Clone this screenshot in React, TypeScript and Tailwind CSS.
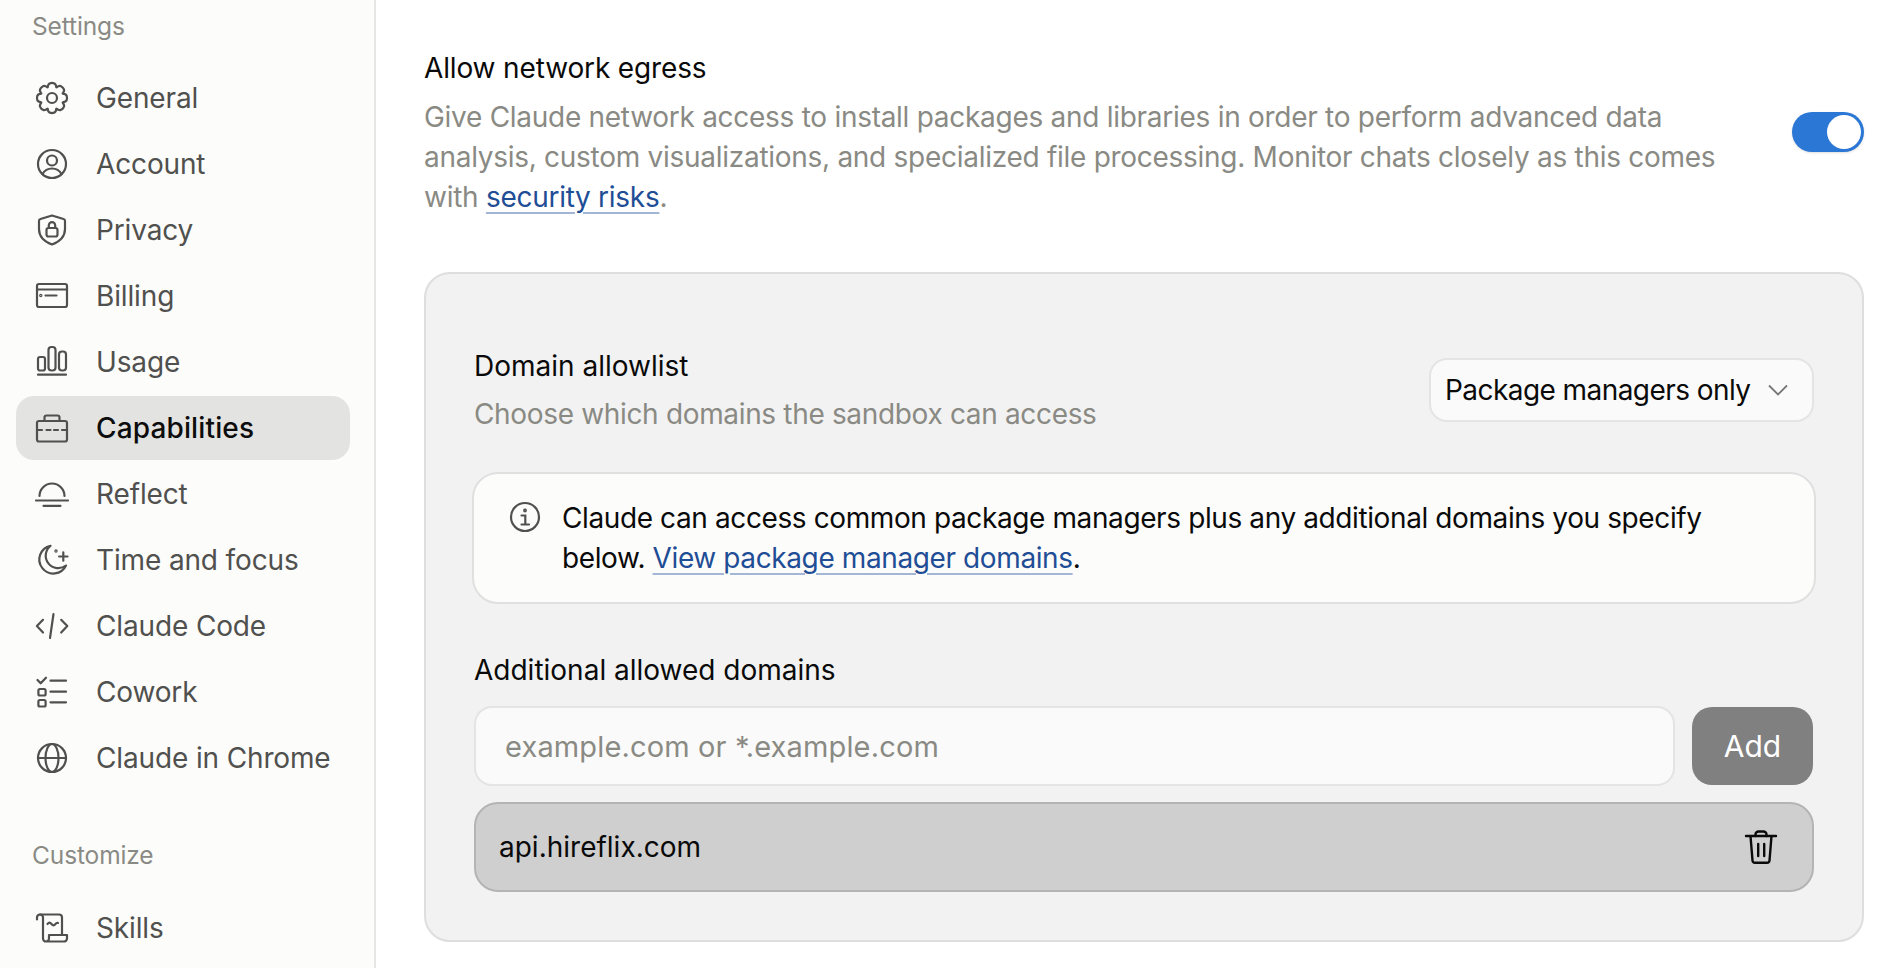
import React from 'react';

const stroke = {
  fill: 'none',
  stroke: 'currentColor',
  strokeWidth: 2.2,
  strokeLinecap: 'round' as const,
  strokeLinejoin: 'round' as const,
};

const Icon = ({ children, className = 'w-8 h-8 shrink-0 overflow-visible' }: { children: React.ReactNode; className?: string }) => (
  <svg viewBox="0 0 32 32" className={className} {...stroke}>
    {children}
  </svg>
);

// eight rounded teeth around the hub
const gearPath = Array.from({ length: 8 }, (_, i) => {
  const at = (deg: number, r: number) => {
    const a = ((i * 45 - 90 + deg) * Math.PI) / 180;
    return `${(16 + r * Math.cos(a)).toFixed(2)} ${(16 + r * Math.sin(a)).toFixed(2)}`;
  };
  return `${i === 0 ? 'M' : 'L'}${at(-22, 11.6)} Q${at(-15, 14.8)} ${at(-8, 14.8)} Q${at(0, 15.4)} ${at(8, 14.8)} Q${at(15, 14.8)} ${at(22, 11.6)}`;
}).join(' ') + ' Z';

const GearIcon = () => (
  <Icon>
    <path d={gearPath} />
    <circle cx="16" cy="16" r="5" />
  </Icon>
);

const AccountIcon = () => (
  <Icon>
    <circle cx="16" cy="16" r="14" />
    <circle cx="16" cy="12.5" r="5" />
    <path d="M6.500 26c2-3.600 5.500-5.500 9.500-5.500s7.500 1.900 9.500 5.500" />
  </Icon>
);

const PrivacyIcon = () => (
  <Icon>
    <path d="M16 1.500 27.500 5a2 2 0 0 1 1.500 2v8c0 7.500-5 12.500-13 15.500C8 27.500 3 22.500 3 15V7a2 2 0 0 1 1.500-2z" />
    <rect x="10.500" y="14" width="11" height="8.500" rx="2" />
    <path d="M12.800 14v-2.700a3.200 3.200 0 0 1 6.400 0V14" />
  </Icon>
);

const BillingIcon = () => (
  <Icon>
    <rect x="1" y="4" width="30" height="23" rx="2" />
    <path d="M1 9.500h30M9.500 15.500h11" />
    <circle cx="4.800" cy="15.500" r=".6" />
  </Icon>
);

const UsageIcon = () => (
  <Icon>
    <rect x="2" y="11" width="7" height="13.500" rx="2" />
    <rect x="12.500" y="1" width="7" height="23.500" rx="3" />
    <rect x="23" y="5.500" width="7" height="19" rx="3" />
    <path d="M2 28.700h28" />
  </Icon>
);

const BriefcaseIcon = () => (
  <Icon>
    <rect x="1" y="9" width="30" height="20.500" rx="2" />
    <path d="M8.500 9V5.500a2 2 0 0 1 2-2h11a2 2 0 0 1 2 2V9M1 18h5M10.500 18h4M18 18h4M26 18h5" />
  </Icon>
);

const ReflectIcon = () => (
  <Icon>
    <path d="M3.500 18a12.500 12.500 0 0 1 25 0M0 22.500h32M7.500 27.800h17" />
  </Icon>
);

const MoonIcon = () => (
  <Icon>
    <path d="M14.500 1.800a14 14 0 1 0 15.500 19.700A12 12 0 0 1 14.500 1.800z" />
    <path d="M27.300 8.300v8.400M23.100 12.500h8.400" />
    <circle cx="20" cy="7" r=".6" />
  </Icon>
);

const CodeIcon = () => (
  <Icon>
    <path d="M7 9.800.9 16 7 22.500M25.200 9.800 31.300 16l-6.100 6.500M17.500 4 14 28" />
  </Icon>
);

const CoworkIcon = () => (
  <Icon>
    <path d="m1.500 4 3.200 3.300L10 1.700" />
    <rect x="2.400" y="13" width="7.200" height="6.500" rx="1.500" />
    <rect x="2.400" y="24" width="7.200" height="6.500" rx="1.500" />
    <path d="M14.500 4.700H30M14.500 15.700H30M14.500 26.300H30" />
  </Icon>
);

const GlobeIcon = () => (
  <Icon>
    <circle cx="16" cy="16" r="14" />
    <ellipse cx="16" cy="16" rx="6.500" ry="14" />
    <path d="M2 16h28" />
  </Icon>
);

const SkillsIcon = () => (
  <Icon>
    <path d="M1 7.500V5.500A3 3 0 0 1 4 2.500h19a3 3 0 0 1 3 3v17.500" />
    <path d="M4 2.500a3 3 0 0 1 3 3v21a3 3 0 0 0 3 3h18a3 3 0 0 0 3-3V23H13v3.500a3 3 0 0 1-3 3" />
    <path d="M11.500 12c1.500-1.800 2.500-1.800 4 0s2.500 1.800 4 0 1.500-1.200 2.500-1" />
  </Icon>
);

const items = [
  { label: 'General', icon: GearIcon },
  { label: 'Account', icon: AccountIcon },
  { label: 'Privacy', icon: PrivacyIcon },
  { label: 'Billing', icon: BillingIcon },
  { label: 'Usage', icon: UsageIcon },
  { label: 'Capabilities', icon: BriefcaseIcon, active: true },
  { label: 'Reflect', icon: ReflectIcon },
  { label: 'Time and focus', icon: MoonIcon },
  { label: 'Claude Code', icon: CodeIcon },
  { label: 'Cowork', icon: CoworkIcon },
  { label: 'Claude in Chrome', icon: GlobeIcon },
];

const NavItem = ({ label, icon: ItemIcon, active }: { label: string; icon: React.ElementType; active?: boolean }) => (
  <a
    className={
      active
        ? 'flex items-center h-16 pl-5 gap-[28px] rounded-[18px] bg-[#e3e3e1] text-[#0d0d0d] font-medium tracking-[0.005em]'
        : 'flex items-center h-16 pl-5 gap-[28px] rounded-[18px] text-[#50504e]'
    }
  >
    <span className="text-[#50504e]">
      <ItemIcon />
    </span>
    {label}
  </a>
);

const Sidebar = () => (
  <aside className="w-[376px] shrink-0 h-full border-r-2 border-[#e6e6e4] bg-[#fcfcfa] pl-4 pr-6 pt-[6px] text-[28px] tracking-[-0.005em]">
    <div className="h-10 pl-4 flex items-center text-[24.5px] tracking-[-0.005em] text-[#8a8a85] mb-5">Settings</div>
    <nav className="flex flex-col gap-[2px]">
      {items.map((item) => (
        <NavItem key={item.label} {...item} />
      ))}
    </nav>
    <div className="h-10 pl-4 flex items-center text-[24.5px] tracking-[-0.005em] text-[#8a8a85] mt-[45px] mb-[21px]">Customize</div>
    <NavItem label="Skills" icon={SkillsIcon} />
  </aside>
);

const Toggle = () => (
  <div className="w-[72px] h-10 mb-[2px] rounded-full bg-[#2b77d6] flex items-center justify-end pr-[3px] shrink-0 shadow-sm">
    <div className="w-[34px] h-[34px] rounded-full bg-white" />
  </div>
);

const DomainPanel = () => (
  <section className="mt-[55px] rounded-[26px] border-2 border-[#dedede] bg-[#f2f2f2] px-[48px] pt-[72px] pb-[48px]">
    <div className="flex items-center justify-between">
      <div>
        <div className="leading-10 tracking-normal text-[#0a0a0a]">Domain allowlist</div>
        <div className="mt-2 leading-10 tracking-[-0.012em] text-[#8a8a84]">Choose which domains the sandbox can access</div>
      </div>
      <button className="w-[385px] h-16 -mt-px rounded-[18px] border-2 border-[#e4e4e4] bg-[#fafafa] flex items-center justify-between pl-[14px] pr-[22px] tracking-[-0.02em] text-[#0a0a0a]">
        Package managers only
        <svg viewBox="0 0 24 24" className="w-6 h-6 text-[#777]" fill="none" stroke="currentColor" strokeWidth="1.800">
          <path d="m3 7.500 9 9 9-9" />
        </svg>
      </button>
    </div>

    <div className="mt-[38px] -ml-[2px] -mr-[2px] h-[132px] rounded-[26px] border-2 border-[#e0e0e0] bg-[#fcfcfa] pl-[35px] pt-6 flex gap-[21px] text-[#0a0a0a]">
      <svg viewBox="0 0 32 32" className="w-8 h-8 mt-[3px] shrink-0 text-[#50504e]" fill="none" stroke="currentColor" strokeWidth="2.200" strokeLinecap="round">
        <circle cx="16" cy="16" r="14" />
        <path d="M12.500 14.500H16.300V23M12.500 23.500h7.500" />
        <circle cx="16" cy="9.500" r=".8" />
      </svg>
      <p className="leading-10 tracking-[-0.014em]">
        Claude can access common package managers plus any additional domains you specify
        <br />
        below.{' '}
        <a className="text-[#1f4e96] underline decoration-[#a3b6d6] decoration-2 underline-offset-[5px]">View package manager domains</a>.
      </p>
    </div>

    <div className="mt-[46px] leading-10 tracking-normal text-[#0a0a0a]">Additional allowed domains</div>

    <div className="mt-4 flex items-center gap-[17px]">
      <input
        readOnly
        placeholder="example.com or *.example.com"
        className="flex-1 h-20 rounded-[18px] border-2 border-[#e4e4e4] bg-[#fafafa] pl-[29px] outline-none text-[29px] tracking-[0.005em] placeholder:text-[#8a8a84]"
      />
      <button className="w-[121px] h-[78px] mr-px rounded-[20px] bg-[#808080] text-white text-[30px] tracking-normal">Add</button>
    </div>

    <div className="mt-4 h-[90px] rounded-[24px] border-2 border-[#b4b4b4] bg-[#cfcfcf] flex items-center justify-between pl-[23px] pr-[35px] tracking-normal text-[#0a0a0a]">
      api.hireflix.com
      <svg viewBox="0 0 32 32" className="w-8 h-8 overflow-visible" fill="none" stroke="#0a0a0a" strokeWidth="2.400" strokeLinecap="round" strokeLinejoin="round">
        <path d="M1 5h30M5.500 5l2 24.500a2.500 2.500 0 0 0 2.500 2.300h12a2.500 2.500 0 0 0 2.500-2.300l2-24.500" />
        <path d="M10.500 5V3.500A3 3 0 0 1 13.500.5h5a3 3 0 0 1 3 3V5M13.200 13v12M19.200 13v12" />
      </svg>
    </div>
  </section>
);

export default function App() {
  return (
    <div className="w-[1898px] h-[968px] overflow-hidden flex bg-white font-[family-name:Inter,sans-serif] text-[28px] tracking-[-0.01em]">
      <Sidebar />
      <main className="flex-1 pl-[48px] pr-[34px] pt-12">
        <div className="flex items-center justify-between">
          <div>
            <h2 className="leading-10 tracking-[-0.005em] text-[#0a0a0a]">Allow network egress</h2>
            <p className="mt-[9px] leading-10 text-[#8a8a84]">
              Give Claude network access to install packages and libraries in order to perform advanced data
              <br />
              analysis, custom visualizations, and specialized file processing. Monitor chats closely as this comes
              <br />
              with <a className="text-[#1f4e96] underline decoration-[#a3b6d6] decoration-2 underline-offset-[5px]">security risks</a>.
            </p>
          </div>
          <Toggle />
        </div>
        <DomainPanel />
      </main>
    </div>
  );
}
